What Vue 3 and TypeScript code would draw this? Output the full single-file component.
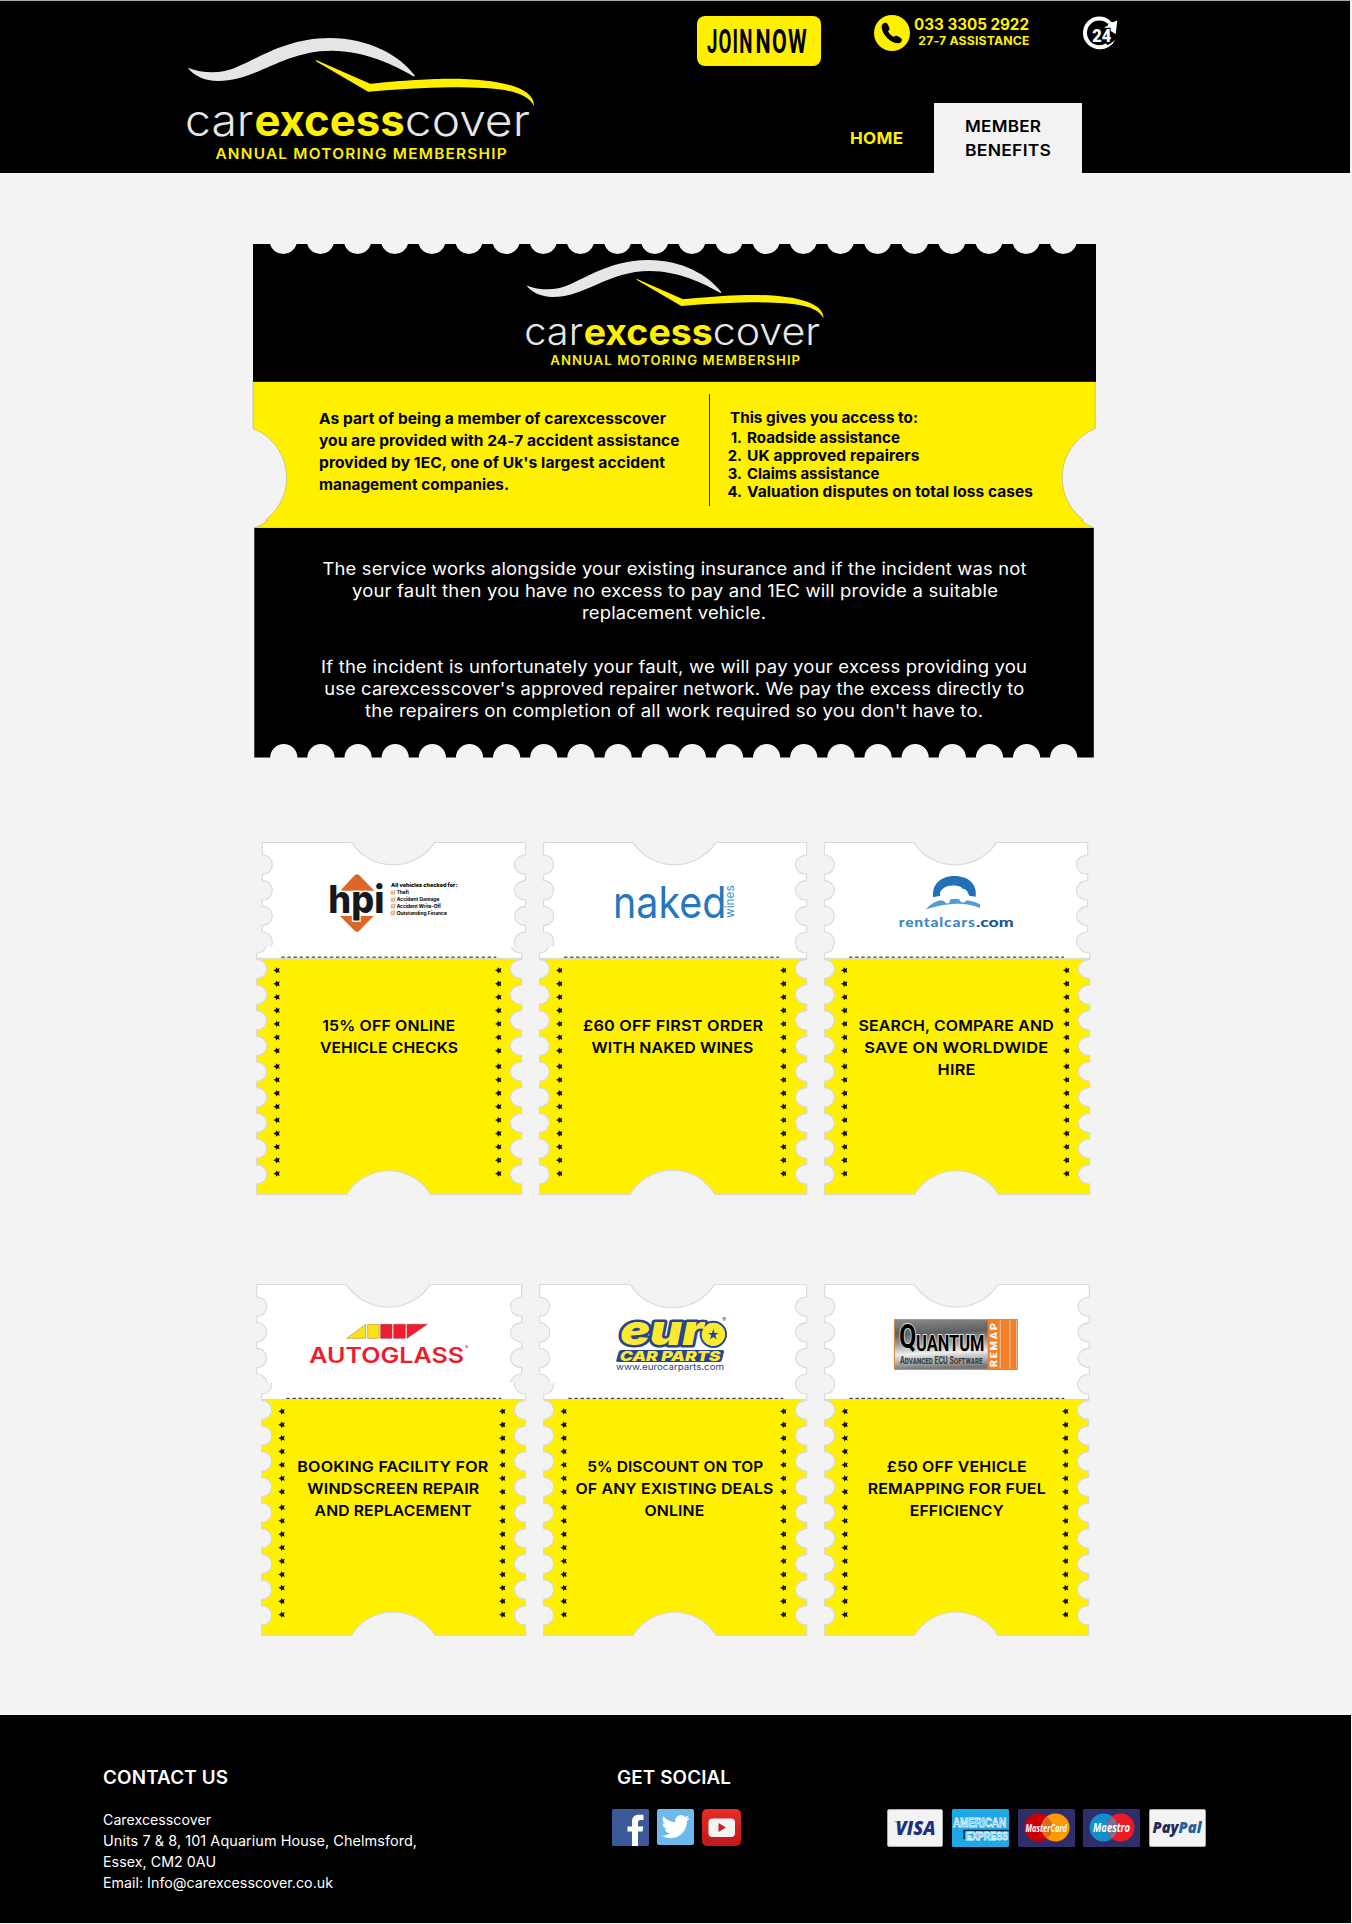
<script setup lang="ts">
type Line = [text: string, width: number]

interface Coupon {
  id: string
  ox: number
  oy: number
  top: [number, number]
  base: [number, number]
  row: Row
  center: number
  lines: Line[]
}

interface Row {
  top: number
  seam: number
  fold: number
  bottom: number
}

// Fits a line of text to the given width, partly by widening the letters and partly by tracking.
const vFit = {
  mounted(el: HTMLElement, binding: { value: number }) {
    const count = (el.textContent ?? '').length
    const natural = el.getBoundingClientRect().width
    const ratio = binding.value / natural
    const scale = Math.min(1.1, Math.max(0.95, Math.pow(ratio, 0.8)))
    const spacing = (binding.value / scale - natural) / Math.max(count - 1, 1)
    el.style.letterSpacing = `${spacing}px`
    el.style.marginRight = `${-spacing}px`
    el.style.transform = `scaleX(${scale})`
  },
}

const roofPath =
  'M114 202C150 216 190 219 225 212C300 195 390 113 540 113C655 113 750 165 794 225C796 229 792 229 789 227C738 196 645 151 545 151C400 151 320 242 205 242C165 242 130 225 114 202Z'
const bonnetPath =
  'M499 180C500 179 502 180 504 181L661 250C760 240 850 235 900 235C1060 235 1155 265 1152 317C1130 268 1040 261 905 261C820 263 740 266 655 274L501 184C498 182 498 181 499 180Z'

const intro: Line[] = [
  ['As part of being a member of carexcesscover', 347],
  ['you are provided with 24-7 accident assistance', 360.5],
  ["provided by 1EC, one of Uk's largest accident", 346],
  ['management companies.', 190],
]
const access: Line[] = [
  ['Roadside assistance', 153],
  ['UK approved repairers', 172.5],
  ['Claims assistance', 132.5],
  ['Valuation disputes on total loss cases', 286],
]
const paragraphs: Line[][] = [
  [
    ['The service works alongside your existing insurance and if the incident was not', 704],
    ['your fault then you have no excess to pay and 1EC will provide a suitable', 646],
    ['replacement vehicle.', 184],
  ],
  [
    ['If the incident is unfortunately your fault, we will pay your excess providing you', 706],
    ["use carexcesscover's approved repairer network. We pay the excess directly to", 700],
    ["the repairers on completion of all work required so you don't have to.", 618],
  ],
]
const address: Line[] = [
  ['Carexcesscover', 108],
  ['Units 7 & 8, 101 Aquarium House, Chelmsford,', 314],
  ['Essex, CM2 0AU', 113],
  ['Email: Info@carexcesscover.co.uk', 230],
]

// Outline of the large ticket.
function perforation(first: number, y: number, sweep: 0 | 1, half: number, r: number, reverse = false): string {
  const step = 37.14
  let d = ''
  for (let i = 0; i < 22; i++) {
    const c = first + step * (reverse ? 21 - i : i)
    const a = reverse ? c + half : c - half
    const b = reverse ? c - half : c + half
    d += `L${a} ${y}A${r} ${r} 0 0 ${sweep} ${b} ${y}`
  }
  return d
}
const ticketHead = `M253 244${perforation(283.3, 244, 0, 13.3, 13.8)}L1096 244V382H253Z`
const ticketFoot = `M254.3 528H1093.8V757.6${perforation(283.8, 757.6, 0, 13.6, 13.6, true)}L254.3 757.6Z`
const ticketBand =
  'M253 382H1095.3V428.5A52.9 52.9 0 0 0 1083.5 520L1081 520.5Q1087 525 1094 528H254Q262 525 268 520.5L265.5 520A52.9 52.9 0 0 0 253 428.5Z'

// Coupons are drawn in units of a third of a pixel.
const rowOne: Row = { top: 37, seam: 350, fold: 386, bottom: 1093 }
const rowTwo: Row = { top: 28, seam: 323, fold: 374.5, bottom: 1081 }

const coupons: Coupon[] = [
  { id: 'hpi', ox: 33, oy: 36, top: [52, 842], base: [35, 830], row: rowOne, center: 388.7 - 256,
    lines: [['15% OFF ONLINE', 133], ['VEHICLE CHECKS', 138]] },
  { id: 'naked', ox: 27, oy: 36, top: [41, 830], base: [28, 830], row: rowOne, center: 672.6 - 539,
    lines: [['£60 OFF FIRST ORDER', 180], ['WITH NAKED WINES', 162]] },
  { id: 'rental', ox: 42, oy: 36, top: [43, 833], base: [43, 839], row: rowOne, center: 956.4 - 824,
    lines: [['SEARCH, COMPARE AND', 195], ['SAVE ON WORLDWIDE', 184], ['HIRE', 38]] },
  { id: 'autoglass', ox: 33, oy: 27, top: [35, 830], base: [50, 842], row: rowTwo, center: 393 - 256,
    lines: [['BOOKING FACILITY FOR', 191], ['WINDSCREEN REPAIR', 172], ['AND REPLACEMENT', 157]] },
  { id: 'euro', ox: 882, oy: 27, top: [884, 1685], base: [896, 1685], row: rowTwo, center: 674.8 - 539,
    lines: [['5% DISCOUNT ON TOP', 176], ['OF ANY EXISTING DEALS', 198], ['ONLINE', 60]] },
  { id: 'quantum', ox: 462, oy: 27, top: [464, 1258], base: [464, 1256], row: rowTwo, center: 956.6 - 824,
    lines: [['£50 OFF VEHICLE', 140], ['REMAPPING FOR FUEL', 178], ['EFFICIENCY', 94]] },
]

const BITE = 58
const STEP = 77

function stubPath(c: Coupon): string {
  const [l, r] = c.top
  const t = c.row.top
  const w = r - l
  let d = `M${l} ${t}H${l + w * 0.339}A149 149 0 0 0 ${l + w * 0.655} ${t}H${r}`
  for (let i = 0; i < 5; i++) {
    const y = t + 38 + i * STEP
    d += `V${y}C${r - 45} ${y + 2} ${r - 45} ${y + BITE - 2} ${r} ${y + BITE}`
  }
  d += `H${l}`
  for (let i = 4; i >= 0; i--) {
    const y = t + 38 + i * STEP
    d += `V${y + BITE}C${l + 40} ${y + BITE - 2} ${l + 40} ${y + 2} ${l} ${y}`
  }
  return d + 'Z'
}

function basePath(c: Coupon): string {
  const [l, r] = c.base
  const b = c.row.bottom
  const w = r - l
  const start = b - 31 - BITE
  let d = `M${l} ${b}H${l + w * 0.34}A147 147 0 0 1 ${l + w * 0.656} ${b}H${r}`
  for (let i = 0; i < 11; i++) {
    const y = start - i * STEP
    d += `V${y + BITE}C${r - 45} ${y + BITE - 2} ${r - 45} ${y + 2} ${r} ${y}`
  }
  d += `H${l}`
  for (let i = 10; i >= 0; i--) {
    const y = start - i * STEP
    d += `V${y}C${l + 40} ${y + 2} ${l + 40} ${y + BITE - 2} ${l} ${y + BITE}`
  }
  return d + 'Z'
}

const starOffsets = Array.from({ length: 16 }, (_, i) => 672 - i * 40.2 - (i > 6 ? 7 : 0))

const viewBox = (c: Coupon) => `${c.ox} ${c.oy} 810 1062`
</script>

<template>
  <div class="page">
    <header class="top">
      <svg class="logo" viewBox="112 113 1040 367" width="347" height="122.4">
        <path :d="roofPath" fill="#e6e6e6" />
        <path :d="bonnetPath" fill="#fff000" />
        <g font-family="Inter, sans-serif" font-size="130">
          <text x="106" y="408" font-weight="300" fill="#e6e6e6" textLength="205" lengthAdjust="spacingAndGlyphs">car</text>
          <text x="314" y="408" font-weight="700" fill="#fff000" textLength="451" lengthAdjust="spacingAndGlyphs">excess</text>
          <text x="765" y="408" font-weight="300" fill="#e6e6e6" textLength="375" lengthAdjust="spacingAndGlyphs">cover</text>
          <text x="197" y="477" font-size="44" font-weight="600" fill="#fff000" textLength="877" lengthAdjust="spacingAndGlyphs" letter-spacing="3.5">ANNUAL MOTORING MEMBERSHIP</text>
        </g>
      </svg>
      <div class="top-right">
        <div class="tools">
          <a class="join">
            <svg width="124" height="50" viewBox="0 0 124 50" font-family="Roboto, sans-serif" font-weight="700" font-size="33.5">
              <text x="10" y="36.8" textLength="46.5" lengthAdjust="spacingAndGlyphs" letter-spacing="2">JOIN</text>
              <text x="58.5" y="36.8" textLength="52.5" lengthAdjust="spacingAndGlyphs" letter-spacing="2">NOW</text>
            </svg>
          </a>
          <svg class="phone" width="36" height="36" viewBox="0 0 108 108">
            <circle cx="54" cy="54" r="54" fill="#fff000" />
            <path d="M27 26C32 22 39 23 42 29L46 38C48 42 46 45 42 49C46 57 51 62 59 66C63 62 66 61 70 63L79 68C85 71 85 77 82 80C75 87 64 86 51 78C37 69 27 56 24 43C22 35 23 29 27 26Z" fill="#000" />
          </svg>
          <div class="call">
            <span v-fit="115" class="number">033 3305 2922</span>
            <span v-fit="111" class="assist">27-7 ASSISTANCE</span>
          </div>
          <svg class="clock" width="36" height="34" viewBox="1237 47 108 102">
            <path d="M1312 134A43 43 0 1 1 1318 66" fill="none" stroke="#fff" stroke-width="12" />
            <path d="M1337 118A50 50 0 0 1 1290 147L1297 137Q1320 135 1337 118Z" fill="#fff" />
            <path d="M1343 60L1338 101L1304 81L1314 76L1318 62L1330 66Z" fill="#fff" />
            <text x="1268" y="126" font-family="Roboto, sans-serif" font-size="57" font-weight="900" fill="#fff" stroke="#000" stroke-width="7" paint-order="stroke" textLength="57" lengthAdjust="spacingAndGlyphs">24</text>
          </svg>
        </div>
        <nav>
          <a class="home"><span v-fit="53">HOME</span></a>
          <a class="tab"><span v-fit="76">MEMBER</span><span v-fit="86">BENEFITS</span></a>
        </nav>
      </div>
    </header>

    <main>
      <section class="ticket">
        <svg class="back" width="843" height="514" viewBox="253 244 843 514">
          <path :d="ticketHead" />
          <path :d="ticketFoot" />
          <path :d="ticketBand" fill="#fff000" stroke="#b9b48a" stroke-width=".7" />
          <path d="M253.5 382H1095V383H253Z" fill="#fff000" />
          <path d="M253 381.5H1096V382H253ZM254.5 528H1093.7V529H254.5Z" />
        </svg>
        <div class="ticket-body">
          <svg class="ticket-logo" viewBox="112 113 1040 367" width="297.5" height="105">
            <path :d="roofPath" fill="#e6e6e6" />
            <path :d="bonnetPath" fill="#fff000" />
            <g font-family="Inter, sans-serif" font-size="130">
              <text x="106" y="411" font-weight="300" fill="#e6e6e6" textLength="205" lengthAdjust="spacingAndGlyphs">car</text>
              <text x="314" y="411" font-weight="700" fill="#fff000" textLength="451" lengthAdjust="spacingAndGlyphs">excess</text>
              <text x="765" y="411" font-weight="300" fill="#e6e6e6" textLength="375" lengthAdjust="spacingAndGlyphs">cover</text>
              <text x="197" y="481" font-size="44" font-weight="600" fill="#fff000" textLength="877" lengthAdjust="spacingAndGlyphs" letter-spacing="3.5">ANNUAL MOTORING MEMBERSHIP</text>
            </g>
          </svg>
          <div class="band">
            <div class="intro">
              <p v-for="l in intro" :key="l[0]"><span v-fit="l[1]">{{ l[0] }}</span></p>
            </div>
            <div class="access">
              <p><span v-fit="188">This gives you access to:</span></p>
              <ol>
                <li v-for="(l, i) in access" :key="l[0]">
                  <b>{{ i + 1 }}.</b><span v-fit="l[1]">{{ l[0] }}</span>
                </li>
              </ol>
            </div>
          </div>
          <div class="service">
            <div v-for="(p, i) in paragraphs" :key="i" class="para">
              <p v-for="l in p" :key="l[0]"><span v-fit="l[1]">{{ l[0] }}</span></p>
            </div>
          </div>
        </div>
      </section>

      <section class="coupons">
        <article v-for="c in coupons" :key="c.id" class="coupon">
          <svg class="back" width="270" height="354" :viewBox="viewBox(c)">
            <svg class="clip" :x="c.ox" :y="c.oy" width="810" :height="c.row.seam - c.oy" :viewBox="`${c.ox} ${c.oy} 810 ${c.row.seam - c.oy}`">
              <path :d="stubPath(c)" fill="#fff" stroke="#dadada" stroke-width="3.4" />
            </svg>
            <svg class="clip" :x="c.ox" :y="c.row.seam" width="810" :height="c.row.fold - c.row.seam" :viewBox="`${c.ox} ${c.row.seam} 810 ${c.row.fold - c.row.seam}`">
              <path :d="basePath(c)" fill="#fff" stroke="#dadada" stroke-width="3.4" />
            </svg>
            <svg class="clip" :x="c.ox" :y="c.row.fold" width="810" :height="c.row.bottom + 3 - c.row.fold" :viewBox="`${c.ox} ${c.row.fold} 810 ${c.row.bottom + 3 - c.row.fold}`">
              <path :d="basePath(c)" fill="#fff000" stroke="#d8d8d8" stroke-width="3.4" />
            </svg>
            <path :d="`M${c.base[0]} ${c.row.fold - 1}H${c.base[1]}`" stroke="#d6d6ce" stroke-width="3" />
            <path :d="`M${c.base[0] + 74} ${c.row.fold - 4.5}H${c.base[0] + 719}`" stroke="#222" stroke-width="3" stroke-dasharray="10.5 7.7" />
            <template v-for="o in starOffsets" :key="o">
              <path v-for="x in [c.base[0] + 60, c.base[1] - 70]" :key="x" :transform="`translate(${x} ${c.row.bottom - o})`"
                d="M-10 0L-3 -3.5L-1 -9.500L3 -5L9 -7L7 0L9 7L3 5L-1 9.500L-3 3.500Z" fill="#141400" />
            </template>

            <g v-if="c.id === 'hpi'" font-family="Inter, sans-serif" font-weight="800">
              <path d="M286 182L329 136Q336 129 343 136L388 182ZM285 258H386L343 302Q336 309 329 302Z" fill="#db6728" />
              <text x="250" y="250" font-size="114" textLength="168" lengthAdjust="spacingAndGlyphs" fill="#16181d" stroke="#fff" stroke-width="8" paint-order="stroke">hpi</text>
              <text x="438" y="170" font-size="16" textLength="199" lengthAdjust="spacingAndGlyphs">All vehicles checked for:</text>
              <g font-size="14" font-weight="700">
                <text x="455" y="193" textLength="37" lengthAdjust="spacingAndGlyphs">Theft</text>
                <text x="455" y="214" textLength="128" lengthAdjust="spacingAndGlyphs">Accident Damage</text>
                <text x="455" y="235" textLength="133" lengthAdjust="spacingAndGlyphs">Accident Write-Off</text>
                <text x="455" y="255" textLength="151" lengthAdjust="spacingAndGlyphs">Outstanding Finance</text>
              </g>
              <path v-for="y in [183, 204, 224, 244]" :key="y" :d="`M439 ${y}h10v10h-10zM441 ${y + 3}l4 4l6 -9`" fill="#fbd9c4" stroke="#e8864f" stroke-width="2" />
            </g>

            <g v-else-if="c.id === 'naked'" fill="#2478c0" font-family="Inter, sans-serif">
              <text x="249" y="264" font-size="132" font-weight="400" textLength="340" lengthAdjust="spacingAndGlyphs">naked</text>
              <text transform="translate(613 264) rotate(-90)" font-size="38" textLength="98" lengthAdjust="spacingAndGlyphs" fill="#3f92cc">wines</text>
            </g>

            <g v-else-if="c.id === 'rental'" font-family="Lato, sans-serif" font-weight="900" font-size="40">
              <path d="M370 202C364 160 396 138 434 138C476 138 502 164 497 200L478 197C474 191 474 183 465 178Q457 178 453 171C430 163 407 166 397 178C390 184 389 190 391 197Z" fill="#2270b5" />
              <path d="M348 238C362 224 374 214 392 211L402 213Q407 223 417 219L421 208C432 206 440 206 448 208Q452 220 464 217L470 211C486 213 500 217 510 223V234C480 222 455 220 430 222C396 224 374 231 348 238Z" fill="#559bd4" />
              <text x="266" y="292" textLength="231" lengthAdjust="spacingAndGlyphs" letter-spacing="2" fill="#4288c6">rentalcars</text>
              <text x="498" y="292" textLength="113" lengthAdjust="spacingAndGlyphs" fill="#17549c">.com</text>
            </g>

            <g v-else-if="c.id === 'autoglass'">
              <path d="M305 190L362 148V190ZM368 148H402V190H368Z" fill="#fbe118" stroke="#b99a3a" stroke-width="2" />
              <path d="M407 148H441V190H407ZM446 148H481V190H446ZM486 148H547L486 190Z" fill="#ee1c2e" stroke="#b8434a" stroke-width="2" />
              <text x="193" y="265" font-family="Inter, sans-serif" font-size="63" font-weight="600" fill="#ee1c2e" textLength="464" lengthAdjust="spacingAndGlyphs">AUTOGLASS</text>
              <circle cx="665" cy="215" r="4" fill="#ee6a70" />
            </g>

            <g v-else-if="c.id === 'euro'" font-family="Inter, sans-serif" font-style="italic" font-weight="900">
              <circle cx="1405" cy="178" r="38" fill="#fdea30" stroke="#27448f" stroke-width="6" />
              <text x="1126" y="209" font-size="124" textLength="250" lengthAdjust="spacingAndGlyphs" fill="#fdea30" stroke="#27448f" stroke-width="15" stroke-linejoin="round" paint-order="stroke">eur</text>
              <circle cx="1405" cy="178" r="34" fill="#fdea30" />
              <path d="M1405 162L1409 174H1421L1411 181L1415 193L1405 186L1395 193L1399 181L1389 174H1401Z" fill="#27448f" />
              <path d="M1130 225H1432Q1438 225 1437 230L1431 255Q1429 261 1423 261H1119Q1113 261 1114 256L1121 231Q1123 225 1130 225Z" fill="#27448f" />
              <text x="1124" y="257" font-size="40" textLength="302" lengthAdjust="spacingAndGlyphs" fill="#fdea30">CAR PARTS</text>
              <text x="1113" y="285" font-size="27" font-weight="400" font-style="normal" textLength="324" lengthAdjust="spacingAndGlyphs" fill="#27448f">www.eurocarparts.com</text>
              <text x="1432" y="140" font-size="17" font-weight="400" font-style="normal" fill="#27448f">®</text>
            </g>

            <g v-else font-family="Roboto, sans-serif" font-weight="700">
              <defs>
                <linearGradient id="steel" x1="0" y1="0" x2="0.12" y2="1">
                  <stop offset="0" stop-color="#8c8c8c" /><stop offset=".3" stop-color="#5f5f5f" />
                  <stop offset=".52" stop-color="#a5a5a5" /><stop offset=".7" stop-color="#efefef" />
                  <stop offset="1" stop-color="#777" />
                </linearGradient>
              </defs>
              <rect x="673.5" y="133.5" width="369" height="150" fill="url(#steel)" stroke="#e38a43" stroke-width="3" />
              <rect x="953" y="132" width="91" height="153" fill="#f57f22" />
              <path d="M991 136V281M1020 136V281M1040 136V281" stroke="#d8b89e" stroke-width="4" />
              <g stroke="#dedede" stroke-width="6" paint-order="stroke">
                <text x="687" y="220" font-size="102" textLength="52" lengthAdjust="spacingAndGlyphs">Q</text>
                <text x="738" y="229" font-size="65" textLength="205" lengthAdjust="spacingAndGlyphs">UANTUM</text>
              </g>
              <text x="690" y="268" font-size="32" font-variant="small-caps" fill="#3c3c3c" stroke="#aaa" stroke-width="2" paint-order="stroke" textLength="247" lengthAdjust="spacingAndGlyphs">Advanced ECU Software</text>
              <text transform="translate(980 276) rotate(-90)" font-size="25" font-weight="900" fill="#fff" textLength="137" letter-spacing="4" lengthAdjust="spacingAndGlyphs">REMAP</text>
            </g>
          </svg>
          <div class="offer" :class="{ lower: c.row === rowOne }" :style="{ width: `${c.center * 2}px` }">
            <p v-for="l in c.lines" :key="l[0]"><span v-fit="l[1]">{{ l[0] }}</span></p>
          </div>
        </article>
      </section>
    </main>

    <footer>
      <div class="contact">
        <h2><span v-fit="125">CONTACT US</span></h2>
        <p v-for="l in address" :key="l[0]"><span v-fit="l[1]">{{ l[0] }}</span></p>
      </div>
      <div class="social">
        <h2><span v-fit="114">GET SOCIAL</span></h2>
        <div class="icons">
          <svg width="37" height="37" viewBox="0 0 37 37">
            <rect width="37" height="37" rx="1.5" fill="#3b5998" />
            <path d="M20 37V22.500H15.500V17.500H20V13C20 8 22.500 5.700 27 5.700H31.500V11H28.500Q26 11 26 13.500V17.500H31.300L30.600 22.500H26V37Z" fill="#fff" />
          </svg>
          <svg width="37" height="36" viewBox="0 0 37 36">
            <rect width="37" height="36" rx="2" fill="#6cb9ee" />
            <path transform="translate(4.500 3.500) scale(1.180)" d="M23.950 4.570a10 10 0 0 1-2.820.77 4.960 4.960 0 0 0 2.160-2.720c-.95.560-2 .960-3.130 1.190a4.920 4.920 0 0 0-8.380 4.480C7.690 8.090 4.070 6.130 1.640 3.160a4.820 4.820 0 0 0-.67 2.480c0 1.710.87 3.210 2.190 4.100a4.900 4.900 0 0 1-2.230-.62v.06a4.920 4.920 0 0 0 3.950 4.830 5 5 0 0 1-2.210.08 4.940 4.940 0 0 0 4.600 3.420A9.870 9.870 0 0 1 0 19.540a14 14 0 0 0 7.550 2.210c9.050 0 14-7.500 14-13.980 0-.21 0-.42-.02-.63a9.940 9.940 0 0 0 2.460-2.550z" fill="#fff" />
          </svg>
          <svg width="39" height="37" viewBox="0 0 39 37">
            <defs>
              <linearGradient id="tube" x1="0" y1="0" x2="0" y2="1">
                <stop offset="0" stop-color="#e52d27" /><stop offset="1" stop-color="#bf171d" />
              </linearGradient>
            </defs>
            <rect width="39" height="37" rx="5" fill="url(#tube)" />
            <rect x="6.500" y="9.500" width="26.500" height="18.500" rx="4" fill="#f4f4f4" />
            <path d="M16.500 14L24 18.600L16.500 23Z" fill="#cf2026" />
          </svg>
        </div>
      </div>
      <div class="cards">
        <svg width="56" height="38" viewBox="0 0 56 38">
          <rect x=".5" y=".5" width="55" height="37" rx="1.500" fill="#f3f3f3" stroke="#aaa" />
          <path d="M6.500 12H12L13.500 16Z" fill="#f3a11d" />
          <text x="8.500" y="26" font-family="Open Sans, sans-serif" font-size="19.500" font-style="italic" font-weight="800" fill="#1b3281" textLength="40" lengthAdjust="spacingAndGlyphs">VISA</text>
        </svg>
        <svg width="57" height="38" viewBox="0 0 57 38" font-family="Liberation Sans, sans-serif" font-weight="700" fill="#4ab4e6" stroke="#e8f6fd" stroke-width=".8">
          <rect width="57" height="38" rx="1.500" fill="#20a8e6" stroke="none" />
          <text x="1" y="18" font-size="12" textLength="53" lengthAdjust="spacingAndGlyphs">AMERICAN</text>
          <path d="M12 30V21.500H57" fill="none" stroke="#0b2c44" stroke-width="1.500" />
          <text x="14" y="31" font-size="11" textLength="42" lengthAdjust="spacingAndGlyphs">EXPRESS</text>
        </svg>
        <svg width="57" height="38" viewBox="0 0 57 38">
          <rect width="57" height="38" rx="1.500" fill="#2f2e6b" />
          <circle cx="20.500" cy="18.500" r="14" fill="#cc0001" /><circle cx="37.500" cy="18.500" r="14" fill="#fe9900" />
          <path d="M29 7.400A14 14 0 0 1 29 29.600A14 14 0 0 1 29 7.400" fill="#dd6a1c" />
          <text x="7.500" y="22.500" font-family="Open Sans, sans-serif" font-size="11" font-style="italic" font-weight="700" fill="#fff" textLength="41.500" lengthAdjust="spacingAndGlyphs">MasterCard</text>
        </svg>
        <svg width="57" height="38" viewBox="0 0 57 38">
          <rect width="57" height="38" rx="1.500" fill="#2f2e6b" />
          <circle cx="20.500" cy="18.500" r="14" fill="#0f8fd0" /><circle cx="37.500" cy="18.500" r="14" fill="#ec1a23" />
          <path d="M29 7.400A14 14 0 0 1 29 29.600A14 14 0 0 1 29 7.400" fill="#7b6f92" />
          <text x="10" y="22.500" font-family="Open Sans, sans-serif" font-size="12" font-style="italic" font-weight="700" fill="#fff" textLength="37" lengthAdjust="spacingAndGlyphs">Maestro</text>
        </svg>
        <svg width="57" height="38" viewBox="0 0 57 38" font-family="Open Sans, sans-serif" font-size="16" font-style="italic" font-weight="800">
          <rect x=".5" y=".5" width="56" height="37" rx="1.500" fill="#f3f3f3" stroke="#aaa" />
          <text x="3.500" y="24" fill="#1f2a5c" textLength="26" lengthAdjust="spacingAndGlyphs">Pay</text>
          <text x="29.500" y="24" fill="#22609c" textLength="23" lengthAdjust="spacingAndGlyphs">Pal</text>
        </svg>
      </div>
    </footer>
  </div>
</template>

<style>
body {
  margin: 0;
  background: #f3f3f3;
}
</style>

<style scoped>
.page {
  width: 1352px;
  height: 1924px;
  display: flex;
  flex-direction: column;
  overflow: hidden;
  font-family: Inter, "Noto Sans", sans-serif;
  color: #000;
}
p, h2, ol { margin: 0; padding: 0; list-style: none; }
span { display: inline-block; white-space: nowrap; transform-origin: 0 50%; }
svg { display: block; flex: none; overflow: visible; }
svg.clip { overflow: hidden; }

.top {
  box-sizing: border-box;
  width: 1350px;
  height: 173px;
  border-top: 1px solid #aaa;
  background: #000;
  display: flex;
}
.logo { margin: 37px 163px 0 187px; }
.top-right { display: flex; flex-direction: column; justify-content: space-between; }
.tools { display: flex; padding-top: 15px; align-items: flex-start; }
.join { width: 124px; height: 50px; border-radius: 8px; background: #fff000; }
.phone { margin: -1px 0 0 53px; }
.call {
  width: 120px;
  display: flex;
  flex-direction: column;
  align-items: flex-end;
  color: #fff000;
  font-weight: 700;
  margin-left: -1px;
}
.call span { transform-origin: 100% 50%; }
.number { font-size: 15.500px; line-height: 18px; }
.assist { font-size: 11.300px; line-height: 14px; }
.clock { margin-left: 53px; }
nav { display: flex; height: 70px; margin-left: 153px; font-size: 16px; line-height: 24px; font-weight: 600; }
.home { width: 84px; padding-top: 23px; box-sizing: border-box; color: #fff000; font-weight: 700; }
.tab {
  width: 148px;
  box-sizing: border-box;
  padding: 11px 0 0 31px;
  background: #f3f3f3;
  display: flex;
  flex-direction: column;
  align-items: flex-start;
}

.ticket { display: grid; margin: 71px 0 0 253px; width: 843px; height: 514px; }
.ticket > * { grid-area: 1 / 1; }
.ticket-body { display: flex; flex-direction: column; }
.ticket-logo { margin: 16px 0 0 273px; }
.band { display: flex; height: 146px; margin-top: 17px; font-size: 15px; line-height: 22px; font-weight: 700; }
.intro { width: 390px; height: 86px; margin: 12px 0 0; padding: 14px 0 12px 66px; border-right: 1px solid #333300; }
.intro p, .access p { height: 22px; }
.access { padding: 25px 0 0 20px; }
.access li { display: flex; height: 18px; line-height: 18px; font-size: 14.800px; }
.access li b { width: 12px; margin-right: 5px; display: flex; justify-content: flex-end; font-weight: 700; }
.service { padding-top: 30px; width: 843px; text-align: center; color: #fff; font-size: 17px; line-height: 22px; }
.service span, .offer span { transform-origin: 50% 50%; }
.para { height: 98px; }
.para p { height: 22px; }

.coupons {
  display: grid;
  grid-template-columns: 283px 285px 270px;
  row-gap: 88px;
  margin: 84px 0 0 256px;
}
.coupon { display: grid; width: 270px; height: 354px; }
.coupon > * { grid-area: 1 / 1; }
.offer { padding-top: 172px; text-align: center; font-size: 15px; line-height: 22px; font-weight: 600; }
.offer.lower { padding-top: 173px; }
.offer p { height: 22px; }

footer { margin-top: 77px; width: 1351px; height: 208px; background: #000; color: #fff; display: flex; }
h2 { font-size: 18px; line-height: 24px; height: 24px; font-weight: 600; }
.contact { width: 514px; box-sizing: border-box; margin-right: 98px; padding: 51px 0 0 103px; font-size: 14px; line-height: 21px; }
.contact h2 { margin-bottom: 19px; }
.contact p { height: 21px; }
.social { width: 275px; padding-top: 51px; }
.social h2 { padding-left: 5px; }
.icons { display: flex; gap: 8px; margin-top: 19px; }
.cards { display: flex; gap: 8.800px; padding-top: 94px; }
</style>
